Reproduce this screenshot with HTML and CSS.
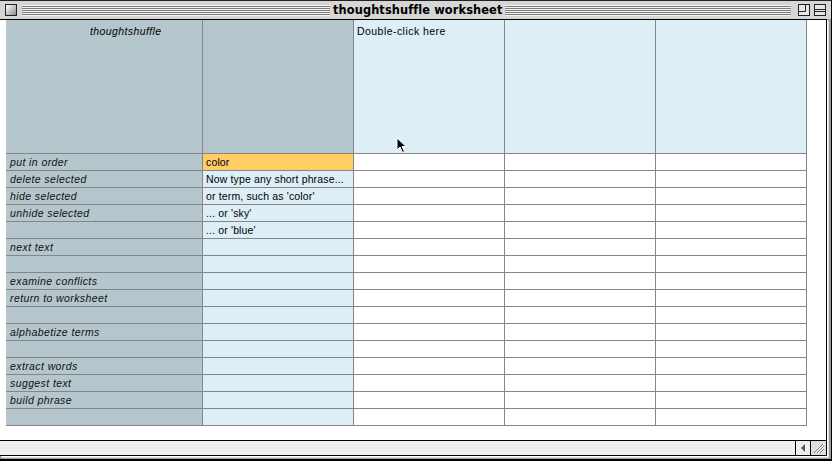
FILE: index.html
```html
<!DOCTYPE html>
<html lang="en">
<head>
<meta charset="UTF-8" />
<title>thoughtshuffle worksheet</title>
<link rel="stylesheet" href="styles.css">
</head>
<body>

<div class="window">
  <div class="titlebar">
    <span class="tbox close"></span>
    <span class="stripes left"></span>
    <span class="title">thoughtshuffle worksheet</span>
    <span class="stripes right"></span>
    <svg class="tbox-svg" width="12" height="12" viewBox="0 0 12 12">
      <rect x="0.5" y="0.5" width="11" height="11" fill="#e6e6e6" stroke="#222"/>
      <path d="M7.5 1 V7.5 H1" fill="none" stroke="#222"/>
    </svg>
    <svg class="tbox-svg" width="12" height="12" viewBox="0 0 12 12">
      <rect x="0.5" y="0.5" width="11" height="11" fill="#e6e6e6" stroke="#222"/>
      <path d="M1 5.5 H11 M1 7.5 H11" fill="none" stroke="#222"/>
    </svg>
  </div>

  <div class="pane">
    <div class="sheet-area">
      <div class="sheet">
        <!-- header row -->
        <div class="c g head-label">thoughtshuffle</div>
        <div class="c g"></div>
        <div class="c b head-hint">Double-click here</div>
        <div class="c b"></div>
        <div class="c b"></div>

        <div class="c g lbl">put in order</div>
        <div class="c o txt">color</div>
        <div class="c w"></div><div class="c w"></div><div class="c w"></div>

        <div class="c g lbl">delete selected</div>
        <div class="c b txt">Now type any short phrase...</div>
        <div class="c w"></div><div class="c w"></div><div class="c w"></div>

        <div class="c g lbl">hide selected</div>
        <div class="c b txt">or term, such as 'color'</div>
        <div class="c w"></div><div class="c w"></div><div class="c w"></div>

        <div class="c g lbl">unhide selected</div>
        <div class="c b txt">... or 'sky'</div>
        <div class="c w"></div><div class="c w"></div><div class="c w"></div>

        <div class="c g lbl"></div>
        <div class="c b txt">... or 'blue'</div>
        <div class="c w"></div><div class="c w"></div><div class="c w"></div>

        <div class="c g lbl">next text</div>
        <div class="c b"></div>
        <div class="c w"></div><div class="c w"></div><div class="c w"></div>

        <div class="c g lbl"></div>
        <div class="c b"></div>
        <div class="c w"></div><div class="c w"></div><div class="c w"></div>

        <div class="c g lbl">examine conflicts</div>
        <div class="c b"></div>
        <div class="c w"></div><div class="c w"></div><div class="c w"></div>

        <div class="c g lbl">return to worksheet</div>
        <div class="c b"></div>
        <div class="c w"></div><div class="c w"></div><div class="c w"></div>

        <div class="c g lbl"></div>
        <div class="c b"></div>
        <div class="c w"></div><div class="c w"></div><div class="c w"></div>

        <div class="c g lbl">alphabetize terms</div>
        <div class="c b"></div>
        <div class="c w"></div><div class="c w"></div><div class="c w"></div>

        <div class="c g lbl"></div>
        <div class="c b"></div>
        <div class="c w"></div><div class="c w"></div><div class="c w"></div>

        <div class="c g lbl">extract words</div>
        <div class="c b"></div>
        <div class="c w"></div><div class="c w"></div><div class="c w"></div>

        <div class="c g lbl">suggest text</div>
        <div class="c b"></div>
        <div class="c w"></div><div class="c w"></div><div class="c w"></div>

        <div class="c g lbl">build phrase</div>
        <div class="c b"></div>
        <div class="c w"></div><div class="c w"></div><div class="c w"></div>

        <div class="c g lbl"></div>
        <div class="c b"></div>
        <div class="c w"></div><div class="c w"></div><div class="c w"></div>
      </div>
    </div>

    <div class="hscroll">
      <div class="track"></div>
      <div class="arrow-btn"><span class="tri"></span></div>
      <svg class="grow" width="15" height="14" viewBox="0 0 15 14">
        <path d="M3 12 L12 3 M6 12 L13 5 M9 12 L13 8" stroke="#777" stroke-width="1" fill="none"/>
        <path d="M4 12 L13 3 M7 12 L13 6 M10 12 L13 9" stroke="#fff" stroke-width="1" fill="none"/>
      </svg>
    </div>
  </div>

  <!-- mouse pointer over the sheet -->
  <svg class="pointer" width="12" height="17" viewBox="0 0 12 17">
    <path d="M1 1 V13 L4 10 L6.5 15.5 L8.5 14.5 L6 9.5 H10 Z" fill="#000" stroke="#fff" stroke-width="1" stroke-linejoin="miter"/>
  </svg>
</div>

</body>
</html>
```

FILE: styles.css
```css
* {
  box-sizing: border-box;
}
html, body {
  margin: 0;
  padding: 0;
  background: #fff;
}
body {
  width: 832px;
  height: 461px;
  overflow: hidden;
  font-family: 'Liberation Sans', Arial, sans-serif;
}

/* window frame */
.window {
  position: relative;
  width: 832px;
  height: 461px;
  background: #9a9a9a;
  border-top: 1px solid #222;
  border-right: 1px solid #000;
  border-bottom: 2px solid #000;
  padding: 0 4px 3px 0;
  display: flex;
  flex-direction: column;
}

/* title bar */
.titlebar {
  height: 18px;
  margin-right: -4px;
  background: #d6d6d6;
  display: flex;
  align-items: center;
  padding: 0 5px;
}
.tbox {
  width: 12px;
  height: 12px;
  flex: none;
  border: 1px solid #222;
  background: linear-gradient(135deg, #fff 0%, #bbb 60%, #888 100%);
}
.stripes {
  height: 11px;
  background: repeating-linear-gradient(to bottom, #f4f4f4 0 1px, #7a7a7a 1px 2px);
}
.stripes.left {
  width: 308px;
  margin-left: 5px;
}
.stripes.right {
  flex: 1;
  margin-right: 7px;
}
.title {
  padding: 0 3px;
  font-family: 'DejaVu Sans', sans-serif;
  font-weight: 700;
  font-size: 11.4px;
  letter-spacing: 0.1px;
  color: #000;
  white-space: nowrap;
  line-height: 18px;
}
.tbox-svg {
  flex: none;
  display: block;
}
.tbox-svg + .tbox-svg {
  margin-left: 4px;
}

/* content pane */
.pane {
  flex: 1;
  background: #fff;
  border: 1px solid #000;
  border-left: none;
  box-shadow: 1px 1px 0 #fff, 2px 2px 0 #dcdcdc;
  display: flex;
  flex-direction: column;
}
.sheet-area {
  flex: 1;
  padding-left: 6px;
}
.sheet {
  display: grid;
  grid-template-columns: 196px 150px 150px 150px 150px;
  grid-template-rows: 133px repeat(16, 16px);
  gap: 1px;
  padding: 0 1px 1px 0;
  background: #858585;
  width: max-content;
}
.c {
  font-size: 10.5px;
  line-height: 16px;
  color: #000;
  white-space: nowrap;
  overflow: hidden;
}
.g { background: #b5c6cd; }
.b { background: #ddeef6; }
.w { background: #fff; }
.o { background: #ffcc66; }

.lbl {
  font-style: italic;
  padding-left: 4px;
  letter-spacing: 0.4px;
  color: #111;
}
.txt {
  padding-left: 3px;
  letter-spacing: 0.15px;
}
.head-label {
  font-style: italic;
  padding: 3px 0 0 84px;
  letter-spacing: 0.4px;
}
.head-hint {
  padding: 3px 0 0 3px;
  letter-spacing: 0.45px;
}

/* horizontal scroll bar */
.hscroll {
  height: 15px;
  border-top: 1px solid #000;
  display: flex;
  background: #eeeeee;
}
.track {
  flex: 1;
}
.arrow-btn {
  width: 15px;
  border-left: 1px solid #000;
  display: flex;
  align-items: center;
  justify-content: center;
}
.tri {
  width: 0;
  height: 0;
  border-top: 4px solid transparent;
  border-bottom: 4px solid transparent;
  border-right: 4px solid #555;
}
.grow {
  display: block;
  border-left: 1px solid #000;
  width: 16px;
  background: #ddd;
}

/* mouse pointer */
.pointer {
  position: absolute;
  left: 396px;
  top: 136px;
}
```
